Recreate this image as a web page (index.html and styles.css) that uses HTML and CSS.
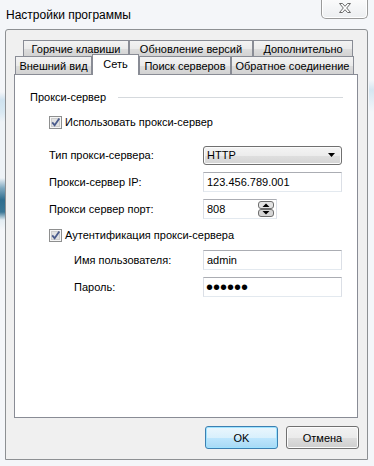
FILE: index.html
```html
<!DOCTYPE html>
<html lang="ru">
<head>
  <meta charset="UTF-8" />
  <title>Настройки программы</title>
  <link rel="stylesheet" href="styles.css">
</head>
<body>
  <div class="window">
    <div class="titlebar">
      <span class="title">Настройки программы</span>
      <button class="close">
        <svg width="12" height="10" viewBox="0 0 12 10">
          <polygon points="0.5,0.5 3.5,0.5 6,3.3 8.5,0.5 11.5,0.5 7.7,5 11.5,9.5 8.5,9.5 6,6.7 3.5,9.5 0.5,9.5 4.3,5" fill="#fff" stroke="#6a6a6a" stroke-width="1" stroke-linejoin="round"/>
        </svg>
      </button>
    </div>

    <div class="client">
      <div class="tabs">
        <div class="tab-row top">
          <div class="tab tab-hotkeys">Горячие клавиши</div>
          <div class="tab tab-updates">Обновление версий</div>
          <div class="tab tab-extra">Дополнительно</div>
        </div>
        <div class="tab-row">
          <div class="tab tab-look">Внешний вид</div>
          <div class="tab tab-net active">Сеть</div>
          <div class="tab tab-search">Поиск серверов</div>
          <div class="tab tab-back">Обратное соединение</div>
        </div>
      </div>

      <div class="panel">
        <div class="group-title"><span>Прокси-сервер</span><i></i></div>

        <label class="check first">
          <span class="box">
            <svg width="13" height="13" viewBox="0 0 13 13">
              <rect x="0.5" y="0.5" width="12" height="12" fill="#f6f6f6" stroke="#8e8f8f"/>
              <rect x="2.5" y="2.5" width="8" height="8" fill="#e2e2e2" stroke="#cdcdcd"/>
              <path d="M3.2 6.4 L5.6 9.2 L10.3 2.4" fill="none" stroke="#4b5c8c" stroke-width="1.8"/>
            </svg>
          </span>
          Использовать прокси-сервер
        </label>

        <div class="row first-row">
          <span class="label">Тип прокси-сервера:</span>
          <div class="combo">
            <span>HTTP</span>
            <svg width="7" height="4" viewBox="0 0 7 4"><path d="M0 0 H7 L3.5 4Z" fill="#000"/></svg>
          </div>
        </div>
        <div class="row">
          <span class="label">Прокси-сервер IP:</span>
          <input class="field" type="text" value="123.456.789.001">
        </div>
        <div class="row">
          <span class="label">Прокси сервер порт:</span>
          <div class="field port">
            <input type="text" value="808">
            <svg class="spin" width="16" height="16" viewBox="0 0 16 16">
              <rect x="0.5" y="0.5" width="15" height="7" rx="2.5" fill="#e4e4e4" stroke="#6f6f6f"/>
              <rect x="0.5" y="8.5" width="15" height="7" rx="2.5" fill="#d6d6d6" stroke="#6f6f6f"/>
              <path d="M4.5 6 L8 2.5 L11.5 6Z" fill="#000"/>
              <path d="M4.5 10 L8 13.5 L11.5 10Z" fill="#000"/>
            </svg>
          </div>
        </div>

        <label class="check second">
          <span class="box">
            <svg width="13" height="13" viewBox="0 0 13 13">
              <rect x="0.5" y="0.5" width="12" height="12" fill="#f6f6f6" stroke="#8e8f8f"/>
              <rect x="2.5" y="2.5" width="8" height="8" fill="#e2e2e2" stroke="#cdcdcd"/>
              <path d="M3.2 6.4 L5.6 9.2 L10.3 2.4" fill="none" stroke="#4b5c8c" stroke-width="1.8"/>
            </svg>
          </span>
          Аутентификация прокси-сервера
        </label>

        <div class="row sub first-sub">
          <span class="label">Имя пользователя:</span>
          <input class="field" type="text" value="admin">
        </div>
        <div class="row sub">
          <span class="label">Пароль:</span>
          <input class="field pass" type="password" value="secret">
        </div>
      </div>

      <div class="buttons">
        <button class="btn default">OK</button>
        <button class="btn">Отмена</button>
      </div>
    </div>
  </div>
</body>
</html>
```

FILE: styles.css
```css
body {
  margin: 0;
  font-family: 'Liberation Sans', Arial, sans-serif;
  font-size: 11px;
  color: #000;
  background: #f4f6f9;
}
.window {
  width: 374px;
  height: 466px;
  overflow: hidden;
  background:
    linear-gradient(#f4f6f9 0, #f4f6f9 92px, #cfe2ef 100px, #d8e8f2 112px, #eef3f7 122px,
      #eef3f7 178px, #7fa9c0 188px, #2f6d8e 200px, #3b7796 212px, #e3edf3 220px, #f4f6f9 230px)
      left top / 5px 100% no-repeat,
    linear-gradient(#f4f6f9 0, #f4f6f9 80px, #d5e6f1 90px, #e6eff6 102px, #f4f6f9 112px)
      right top / 5px 100% no-repeat,
    #f4f6f9;
}
.titlebar {
  height: 29px;
  display: flex;
  align-items: flex-start;
  padding-left: 6px;
  box-sizing: border-box;
}
.title {
  font-size: 12px;
  line-height: 30px;
}
.close {
  margin-left: auto;
  margin-right: 6px;
  margin-top: -1px;
  width: 47px;
  height: 20px;
  border: 1px solid #9a9a9a;
  border-top: none;
  border-radius: 0 0 5px 5px;
  background: linear-gradient(#fbfbfb, #eceef1);
  box-shadow: inset 0 0 0 1px #ffffff;
  padding: 0;
  display: flex;
  align-items: center;
  justify-content: center;
}
.close svg {
  margin-top: -2px;
}
.client {
  margin-left: 5px;
  width: 363px;
  height: 431px;
  box-sizing: border-box;
  border: 1px solid #8d9093;
  border-radius: 3px 3px 0 0;
  background: #f0f0f0;
  padding: 10px 9px 0 8px;
}
.tab-row {
  display: flex;
}
.tab-row.top {
  margin-left: 9px;
}
.tab-row.top .tab {
  height: 16px;
  line-height: 17px;
}
.tab-row:not(.top) {
  margin-left: 1px;
  height: 18px;
}
.tab {
  box-sizing: border-box;
  height: 18px;
  line-height: 18px;
  border: 1px solid #898c95;
  border-bottom: none;
  text-align: center;
  white-space: nowrap;
  background: linear-gradient(#f3f3f3 0%, #ebebeb 50%, #dedede 51%, #d2d2d2 100%);
}
.tab.active {
  position: relative;
  z-index: 1;
  height: 21px;
  line-height: 19px;
  margin-top: -2px;
  background: #ffffff;
}
.tab-hotkeys { width: 106px; }
.tab-updates { width: 124px; }
.tab-extra { width: 100px; }
.tab-look { width: 77px; }
.tab-net { width: 47px; }
.tab-search { width: 92px; }
.tab-back { width: 123px; }

.panel {
  box-sizing: border-box;
  height: 344px;
  border: 1px solid #898c95;
  background: #ffffff;
  padding: 15px 14px 0 15px;
}
.group-title {
  display: flex;
  align-items: center;
  gap: 12px;
  height: 14px;
  line-height: 14px;
}
.group-title i {
  flex: 1;
  border-top: 1px solid #d5d9dd;
}
.check {
  display: flex;
  align-items: center;
  gap: 3px;
  height: 14px;
  line-height: 14px;
  margin-left: 19px;
}
.check .box {
  display: flex;
}
.check.first {
  margin-top: 11px;
}
.check.second {
  margin-top: 9px;
}
.row {
  display: grid;
  grid-template-columns: 154px 139px;
  align-items: center;
  height: 20px;
  margin-left: 19px;
  margin-top: 7px;
}
.row.first-row {
  margin-top: 16px;
}
.row.sub {
  margin-left: 44px;
  grid-template-columns: 129px 139px;
}
.row.first-sub {
  margin-top: 8px;
}
.combo {
  box-sizing: border-box;
  height: 19px;
  border: 1px solid #707070;
  border-radius: 3px;
  background: linear-gradient(#f4f4f4 0%, #ececec 50%, #dfdfdf 51%, #d4d4d4 100%);
  box-shadow: inset 0 0 0 1px #fbfbfb;
  display: flex;
  align-items: center;
  justify-content: space-between;
  padding: 0 6px 0 3px;
}
.field {
  box-sizing: border-box;
  height: 20px;
  border: 1px solid #dbdfe6;
  border-top-color: #abadb3;
  border-bottom-color: #e3e9ef;
  background: #ffffff;
  font: inherit;
  color: #000;
  padding: 0 3px;
  outline: none;
}
.field.port {
  width: 74px;
  display: flex;
  align-items: center;
  padding-right: 2px;
}
.port input {
  flex: 1;
  min-width: 0;
  border: none;
  padding: 0;
  font: inherit;
  outline: none;
}
.field.pass {
  font-size: 20px;
  line-height: 18px;
  padding: 0 2px;
}
.buttons {
  display: flex;
  justify-content: flex-end;
  gap: 8px;
  margin-top: 8px;
  margin-right: -1px;
}
.btn {
  width: 73px;
  height: 23px;
  border: 1px solid #707070;
  border-radius: 3px;
  font: inherit;
  color: #000;
  padding: 0;
  background: linear-gradient(#f2f2f2 0%, #ebebeb 50%, #dddddd 51%, #cfcfcf 100%);
  box-shadow: inset 0 0 0 1px #fcfcfc;
}
.btn.default {
  border-color: #3c7fb1;
  background: linear-gradient(#eaf6fd 0%, #d9f0fc 50%, #bee6fd 51%, #a7d9f5 100%);
  box-shadow: inset 0 0 0 1px #9ee3ff;
}
```
